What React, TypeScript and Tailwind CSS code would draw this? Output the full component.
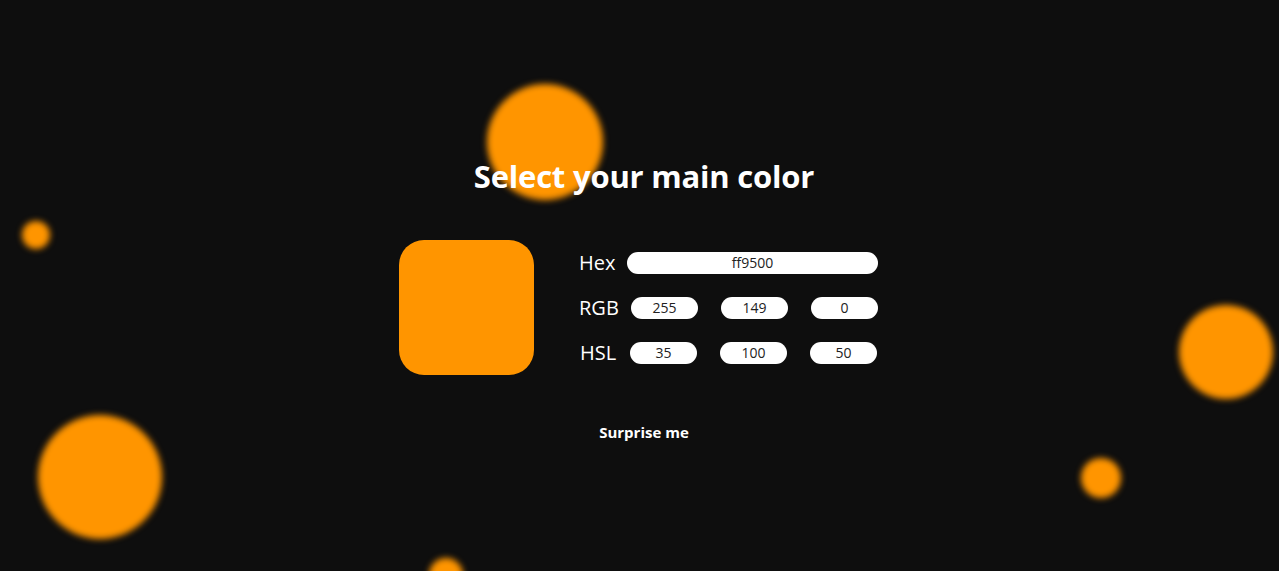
import { useState } from "react";

const ORANGE = "#ff9500";

const BUBBLES = [
  { cls: "left-[487px] top-[84px] h-[116px] w-[116px]" },
  { cls: "left-[22px] top-[221px] h-[28px] w-[28px]" },
  { cls: "left-[38px] top-[415px] h-[124px] w-[124px]" },
  { cls: "left-[1179px] top-[305px] h-[94px] w-[94px]" },
  { cls: "left-[1081px] top-[458px] h-[40px] w-[40px]" },
  { cls: "left-[429px] top-[558px] h-[34px] w-[34px]" },
];

function Field({ value, className }: { value: string; className: string }) {
  return (
    <input
      readOnly
      value={value}
      className={`h-[22px] rounded-full bg-white text-center text-[14px] text-[#222] outline-none ${className}`}
    />
  );
}

export default function App() {
  const [hex] = useState("ff9500");

  return (
    <div
      className="relative h-[571px] w-full overflow-hidden bg-[#0e0e0e]"
      style={{ fontFamily: '"Open Sans", "Noto Sans", sans-serif' }}
    >
      {BUBBLES.map((b, i) => (
        <div
          key={i}
          className={`absolute rounded-full bg-[#ff9500] blur-[3px] ${b.cls}`}
        />
      ))}

      <div className="relative flex flex-col items-center pt-[156px]">
        <h1 className="ml-[9px] text-[31px] leading-[40px] font-bold tracking-[-0.2px] text-white">
          Select your main color
        </h1>

        <div className="mt-[44px] ml-[-2px] flex items-center gap-[45px]">
          <div
            className="h-[135px] w-[135px] rounded-[25px]"
            style={{ backgroundColor: ORANGE }}
          />
          <div className="flex w-[299px] flex-col gap-[23px] text-white">
            <div className="flex items-center justify-between">
              <span className="text-[20px] leading-[22px]">Hex</span>
              <Field value={hex} className="w-[251px]" />
            </div>
            <div className="flex items-center justify-between">
              <span className="text-[20px] leading-[22px]">RGB</span>
              <div className="flex gap-[23px]">
                <Field value="255" className="w-[67px]" />
                <Field value="149" className="w-[67px]" />
                <Field value="0" className="w-[67px]" />
              </div>
            </div>
            <div className="flex items-center justify-between">
              <span className="ml-px text-[20px] leading-[22px]">HSL</span>
              <div className="mr-px flex gap-[23px]">
                <Field value="35" className="w-[67px]" />
                <Field value="100" className="w-[67px]" />
                <Field value="50" className="w-[67px]" />
              </div>
            </div>
          </div>
        </div>

        <button
          type="button"
          className="mt-[46px] ml-[9px] text-[15px] leading-[22px] font-bold text-white"
        >
          Surprise me
        </button>
      </div>
    </div>
  );
}
